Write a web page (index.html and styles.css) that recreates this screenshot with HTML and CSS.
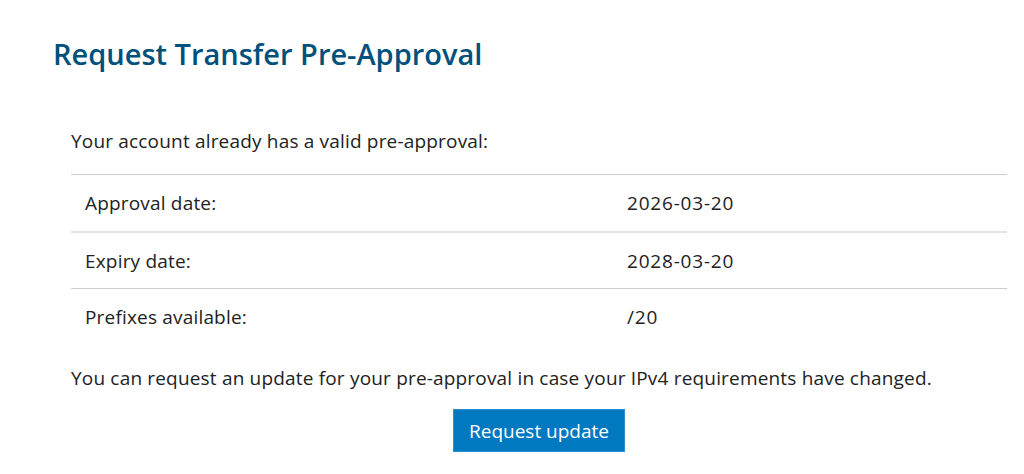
FILE: index.html
```html
<!DOCTYPE html>
<html lang="en">
<head>
<meta charset="utf-8">
<title>Request Transfer Pre-Approval</title>
<link rel="stylesheet" href="styles.css">
</head>
<body>
<main class="page">
  <h1 class="title">Request Transfer Pre-Approval</h1>
  <section class="content">
    <p class="intro">Your account already has a valid pre-approval:</p>
    <table class="details">
      <tbody>
        <tr class="row row-first"><td class="label">Approval date:</td><td class="value">2026-03-20</td></tr>
        <tr class="row row-mid"><td class="label">Expiry date:</td><td class="value">2028-03-20</td></tr>
        <tr class="row row-last"><td class="label">Prefixes available:</td><td class="value">/20</td></tr>
      </tbody>
    </table>
    <p class="note">You can request an update for your pre-approval in case your IPv4 requirements have changed.</p>
    <div class="actions">
      <button class="btn" type="button">Request update</button>
    </div>
  </section>
</main>
</body>
</html>
```

FILE: styles.css
```css
html, body {
  margin: 0;
  padding: 0;
  background: #ffffff;
}

body {
  font-family: "Open Sans", "Noto Sans", sans-serif;
  color: #222222;
  font-size: 19px;
}

.page {
  padding: 32px 17px 0 53px;
}

.title {
  margin: 0;
  font-size: 29px;
  line-height: 44px;
  font-weight: 600;
  color: #00507c;
}

.content {
  margin: 52px 0 0 18px;
  letter-spacing: 0.18px;
}

.intro {
  margin: 0 0 20px 0;
  line-height: 26px;
}

.details {
  width: 100%;
  border-collapse: collapse;
}

.row td {
  padding: 15px 14px;
  line-height: 26px;
}

.label {
  width: 514px;
}

.value {
  letter-spacing: 0.8px;
}

.row-first td {
  border-top: 1px solid #cccccc;
}

.row-mid td {
  border-top: 2px solid #e4e4e4;
  padding-bottom: 14px;
}

.row-last td {
  border-top: 1px solid #cccccc;
}

.note {
  margin: 20px 0 0 0;
  line-height: 26px;
}

.actions {
  display: flex;
  justify-content: center;
  margin-top: 18px;
}

.btn {
  font-family: "Open Sans", "Noto Sans", sans-serif;
  font-size: 19px;
  letter-spacing: 0;
  color: #ffffff;
  background: #0079c1;
  border: 1px solid #2a8fd0;
  border-radius: 0;
  padding: 0 12px;
  line-height: 26px;
  height: 43px;
  width: 172px;
}
```
